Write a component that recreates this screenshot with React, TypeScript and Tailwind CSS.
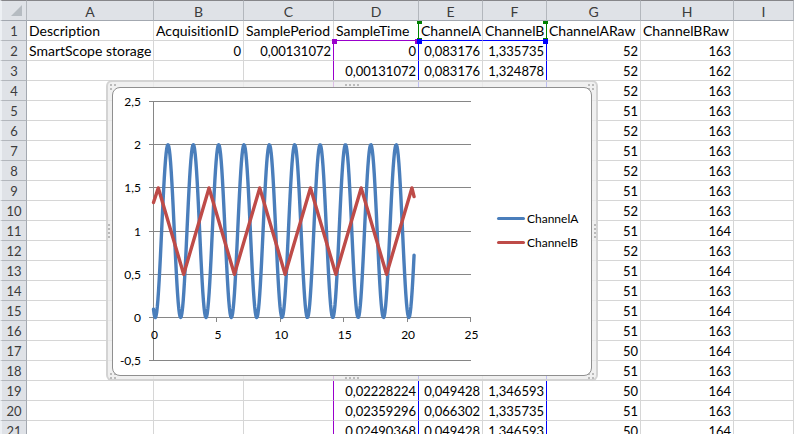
import clsx from "clsx";

interface Sample {
  time: string;
  channelA: string;
  channelB: string;
  rawA: number;
  rawB: number;
}

const COLUMNS = ["A", "B", "C", "D", "E", "F", "G", "H", "I"];

const SAMPLE_PERIOD = 0.00131072;

const RAW_A = [
  52, 52, 52, 51, 52, 51, 52, 51, 52, 51, 52, 51, 51, 51, 51, 50, 51, 50, 51,
  50,
];
const RAW_B = [
  163, 162, 163, 163, 163, 163, 163, 163, 163, 164, 163, 164, 163, 164, 163,
  164, 163, 164, 163, 164,
];

const VOLTS_A: Record<number, string> = {
  50: "0,049428",
  51: "0,066302",
  52: "0,083176",
};
const VOLTS_B: Record<number, string> = {
  162: "1,324878",
  163: "1,335735",
  164: "1,346593",
};

const formatTime = (index: number) =>
  index === 0 ? "0" : (index * SAMPLE_PERIOD).toFixed(8).replace(".", ",");

const samples: Sample[] = RAW_A.map((rawA, index) => ({
  time: formatTime(index),
  channelA: VOLTS_A[rawA],
  channelB: VOLTS_B[RAW_B[index]],
  rawA,
  rawB: RAW_B[index],
}));

// Columns D to F of these samples lie under the chart
const isCovered = (index: number) => index >= 2 && index <= 16;

// Plot area, in the units of the chart's viewBox
const PLOT = { left: 40.5, right: 357.5, zero: 229.5, unit: 86.4 };

const toX = (t: number) => PLOT.left + (t * (PLOT.right - PLOT.left)) / 25;
const toY = (v: number) => PLOT.zero - v * PLOT.unit;

const END_TIME = 20.55;

const sinePoints = Array.from({ length: 413 }, (_, i) => {
  const t = (i * END_TIME) / 412;
  const v = 1 - Math.cos(Math.PI * (t - 0.14));
  return `${toX(t).toFixed(2)},${toY(v).toFixed(2)}`;
}).join(" ");

const trianglePoints = [
  [0, 1.33],
  ...Array.from({ length: 11 }, (_, i) => [0.38 + i * 2, i % 2 ? 0.5 : 1.5]),
  [END_TIME, 1.4],
]
  .map(([t, v]) => `${toX(t).toFixed(2)},${toY(v).toFixed(2)}`)
  .join(" ");

const Y_TICKS = [
  { label: "2,5", y: 13.5 },
  { label: "2", y: 56.5 },
  { label: "1,5", y: 99.5 },
  { label: "1", y: 143.5 },
  { label: "0,5", y: 186.5 },
  { label: "0", y: 229.5 },
  { label: "-0,5", y: 272.5 },
];

const X_TICKS = [0, 5, 10, 15, 20, 25];

const Plot = () => (
  <svg
    viewBox="0 0 376 287"
    className="h-[287px] w-[376px] shrink-0 text-xs"
    role="img"
    aria-label="ChannelA and ChannelB over time"
  >
    <g stroke="#868686" shapeRendering="crispEdges">
      {Y_TICKS.map(({ label, y }) => (
        <line key={label} x1={36} x2={358} y1={y} y2={y} />
      ))}
      <line x1={40.5} x2={40.5} y1={13} y2={273} />
      {X_TICKS.map((t) => (
        <line
          key={t}
          x1={Math.floor(toX(t)) + 0.5}
          x2={Math.floor(toX(t)) + 0.5}
          y1={229}
          y2={234}
        />
      ))}
    </g>
    <g
      fill="none"
      strokeWidth={3.4}
      strokeLinejoin="round"
      strokeLinecap="round"
    >
      <polyline points={sinePoints} stroke="#4a7ebb" />
      <polyline points={trianglePoints} stroke="#be4b48" />
    </g>
    <g fill="#000">
      {Y_TICKS.map(({ label, y }) => (
        <text key={label} x={28} y={y + 4} textAnchor="end">
          {label}
        </text>
      ))}
      {X_TICKS.map((t) => (
        <text key={t} x={toX(t) + 1} y={251} textAnchor="middle">
          {t}
        </text>
      ))}
    </g>
  </svg>
);

const Legend = () => (
  <ul className="mb-0.5 ml-2 flex flex-col gap-2 text-xs leading-4">
    <li className="flex items-center gap-0.5">
      <span className="h-[3px] w-7 rounded-full bg-[#4a7ebb]" />
      ChannelA
    </li>
    <li className="flex items-center gap-0.5">
      <span className="h-[3px] w-7 rounded-full bg-[#be4b48]" />
      ChannelB
    </li>
  </ul>
);

const Grip = ({ className, count }: { className: string; count: number }) => (
  <span className={clsx("absolute grid", className)}>
    {Array.from({ length: count }, (_, i) => (
      <span key={i} className="size-0.5 rounded-full bg-[#a8a8a8]" />
    ))}
  </span>
);

const ChartObject = () => (
  <div className="absolute top-20 left-[106px] h-[301px] w-[492px] rounded-md border-2 border-[#cfcfcf]/90 bg-[#ececec]/80 p-1 pt-[5px]">
    <Grip className="top-0.5 left-0.5 grid-cols-2 gap-0.5" count={3} />
    <Grip className="top-0.5 right-0.5 grid-cols-2 gap-0.5" count={4} />
    <Grip className="bottom-0 left-0.5 grid-cols-2 gap-0.5" count={4} />
    <Grip className="right-0.5 bottom-0 grid-cols-2 gap-0.5" count={4} />
    <Grip className="top-0.5 left-[237px] grid-cols-4 gap-0.5" count={4} />
    <Grip className="bottom-0 left-[237px] grid-cols-4 gap-0.5" count={4} />
    <Grip className="top-[142px] left-0 grid-cols-1 gap-0.5" count={4} />
    <Grip className="top-[142px] right-0 grid-cols-1 gap-0.5" count={4} />
    <div className="relative flex h-[289px] items-center overflow-hidden rounded-lg border border-[#8f8f8f] bg-white">
      <Plot />
      <Legend />
    </div>
  </div>
);

const Handle = ({ className }: { className: string }) => (
  <span className={clsx("absolute z-10 w-[5px]", className)} />
);

const HeaderCell = ({ children }: { children: string }) => (
  <th
    scope="col"
    className="border-t border-r border-b border-t-[#86868a] border-r-[#b3b7bd] border-b-[#a3a8b0] bg-[#dfe2e7] p-0 pt-0.5 text-sm leading-[17px] font-normal text-[#3c3c3c]"
  >
    {children}
  </th>
);

const RowHeader = ({ children }: { children: number }) => (
  <th
    scope="row"
    className="border-r border-b border-l-2 border-r-[#a3a8b0] border-b-[#b3b7bd] border-l-[#edf0f4] bg-[#dfe2e7] p-0 pt-0.5 font-normal text-[#3c3c3c]"
  >
    {children}
  </th>
);

interface CellProps {
  children?: React.ReactNode;
  label?: boolean;
  right?: string;
  bottom?: string;
}

const Cell = ({
  children,
  label,
  right = "border-r-[#d6d6d6]",
  bottom = "border-b-[#d6d6d6]",
}: CellProps) => (
  <td
    className={clsx(
      "relative border-r border-b whitespace-nowrap",
      label
        ? "py-px pr-0 pl-0.5 text-left text-sm leading-[17px]"
        : "pt-0.5 pr-0.5 pb-0 pl-0 text-right",
      right,
      bottom
    )}
  >
    {children}
  </td>
);

const Sheet = () => (
  <table className="w-full min-w-[794px] table-fixed border-separate border-spacing-0 text-[13px] leading-[17px]">
    <colgroup>
      <col className="w-[27px]" />
      <col className="w-[127px]" />
      <col className="w-[90px]" />
      <col className="w-[90px]" />
      <col className="w-[85px]" />
      <col className="w-16" />
      <col className="w-16" />
      <col className="w-[94px]" />
      <col className="w-[93px]" />
      <col />
    </colgroup>
    <thead>
      <tr className="h-[21px]">
        <th className="border-t border-r border-b border-l-2 border-t-[#86868a] border-r-[#b3b7bd] border-b-[#a3a8b0] border-l-[#edf0f4] bg-[#dfe2e7] p-0">
          <button
            type="button"
            aria-label="Select all"
            className="flex h-[19px] w-full items-center justify-end pr-1"
          >
            <svg viewBox="0 0 11 11" className="size-[11px]">
              <path d="M11 0v11H0z" fill="#b5bbc1" />
            </svg>
          </button>
        </th>
        {COLUMNS.map((column) => (
          <HeaderCell key={column}>{column}</HeaderCell>
        ))}
      </tr>
    </thead>
    <tbody>
      <tr className="h-5">
        <RowHeader>{1}</RowHeader>
        <Cell label>Description</Cell>
        <Cell label>AcquisitionID</Cell>
        <Cell label>SamplePeriod</Cell>
        <Cell label right="border-r-[#008000]" bottom="border-b-[#9900cc]">
          SampleTime
          <Handle className="top-0 -right-[4px] h-[3px] bg-[#008000]" />
          <Handle className="-right-[4px] bottom-0 h-0.5 bg-[#008000]" />
        </Cell>
        <Cell label bottom="border-b-[#0000ff]">
          ChannelA
        </Cell>
        <Cell label right="border-r-[#008000]" bottom="border-b-[#0000ff]">
          ChannelB
          <Handle className="top-0 -right-0.5 h-[3px] bg-[#008000]" />
          <Handle className="-right-0.5 bottom-0 h-0.5 bg-[#008000]" />
        </Cell>
        <Cell label>ChannelARaw</Cell>
        <Cell label>ChannelBRaw</Cell>
        <Cell />
      </tr>
      {samples.map((sample, index) => (
        <tr key={index} className="h-5">
          <RowHeader>{index + 2}</RowHeader>
          <Cell label>{index === 0 && "SmartScope storage"}</Cell>
          <Cell>{index === 0 && "0"}</Cell>
          <Cell right="border-r-[#9900cc]">
            {index === 0 && (
              <>
                {formatTime(1)}
                <Handle className="-top-0.5 -right-[4px] h-[5px] bg-[#9900cc]" />
              </>
            )}
          </Cell>
          <Cell right="border-r-[#0000ff]">
            {!isCovered(index) && sample.time}
            {index === 0 && (
              <>
                <Handle className="-top-0.5 -right-0.5 h-[5px] bg-[#9900cc]" />
                <Handle className="-top-0.5 -right-[4px] h-[5px] bg-[#0000ff]" />
              </>
            )}
          </Cell>
          <Cell>{!isCovered(index) && sample.channelA}</Cell>
          <Cell right="border-r-[#0000ff]">
            {!isCovered(index) && sample.channelB}
            {index === 0 && (
              <Handle className="-top-0.5 -right-0.5 h-[5px] bg-[#0000ff]" />
            )}
          </Cell>
          <Cell>{sample.rawA}</Cell>
          <Cell>{sample.rawB}</Cell>
          <Cell />
        </tr>
      ))}
    </tbody>
  </table>
);

const App = () => (
  <main className="relative h-screen overflow-hidden bg-white font-[Lato,Carlito,sans-serif] text-black [font-variant-ligatures:none]">
    <Sheet />
    <ChartObject />
  </main>
);

export default App;
